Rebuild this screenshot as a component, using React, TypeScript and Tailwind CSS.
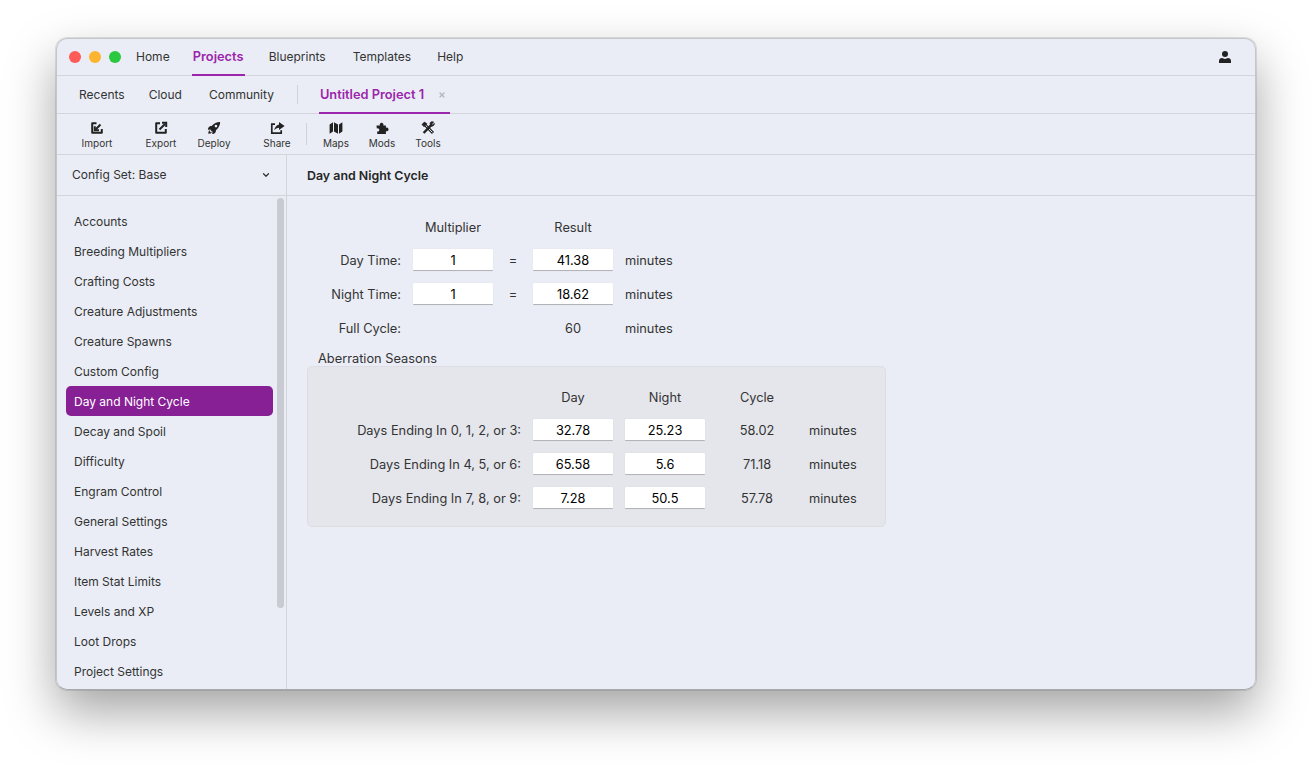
import React from 'react';
import { IoRocketSharp } from 'react-icons/io5';
import { ChevronDown, X } from 'lucide-react';

const sections = [
  'Accounts',
  'Breeding Multipliers',
  'Crafting Costs',
  'Creature Adjustments',
  'Creature Spawns',
  'Custom Config',
  'Day and Night Cycle',
  'Decay and Spoil',
  'Difficulty',
  'Engram Control',
  'General Settings',
  'Harvest Rates',
  'Item Stat Limits',
  'Levels and XP',
  'Loot Drops',
  'Project Settings',
];

const ImportIcon = () => (
  <svg width="14" height="14" viewBox="0 0 14 14" fill="none" stroke="currentColor" strokeWidth="2">
    <path d="M6.5 2.2H2.2v9.6h9.6V8" strokeLinejoin="round" />
    <path d="M10.5 3.5 5.8 8.2" />
    <path d="M4.8 5.2v4h4.2" />
  </svg>
);

const ExportIcon = () => (
  <svg width="14" height="14" viewBox="0 0 14 14" fill="none" stroke="currentColor" strokeWidth="2">
    <path d="M6 2.2H2.2v9.6h9.6V8" strokeLinejoin="round" />
    <path d="M5.5 8.5 11 3" />
    <path d="M8 1.8h4.2V6" />
  </svg>
);

const ShareIcon = () => (
  <svg width="15" height="14" viewBox="0 0 15 14" fill="currentColor">
    <path d="M5 3.2H1.8v9h9.4V9.2" fill="none" stroke="currentColor" strokeWidth="1.7" />
    <path d="M9 1 14.6 5 9 9V6.8C7 6.8 5.4 7.6 4.2 9.6 4.4 6.4 6.4 4 9 3.4z" />
  </svg>
);

const MapIcon = () => (
  <svg width="14" height="14" viewBox="0 0 14 14" fill="currentColor">
    <path d="M.6 3.4 4 1.2v9.4L.6 12.8z" />
    <path d="M5 1.2l4 2.2v9.4l-4-2.2z" />
    <path d="M10 3.4l3.4-2.2v9.4L10 12.8z" />
  </svg>
);

const PuzzleIcon = () => (
  <svg width="14" height="14" viewBox="0 0 14 14" fill="currentColor">
    <path d="M1.5 4.6h3.4a1.9 1.9 0 1 1 3.4 0h2.6v2.2a1.8 1.8 0 1 1 0 3.2V13H2.2v-2.6a1.6 1.6 0 1 0-.4-2.8z" />
  </svg>
);

const ToolsIcon = () => (
  <svg width="14" height="14" viewBox="0 0 14 14" fill="none" stroke="currentColor">
    <path d="M2.4 2.2 12 12" strokeWidth="3" />
    <path d="M3 2.8 11.4 11.4" strokeWidth="1" stroke="#eaedf5" />
    <path d="M1 3.4 3.4 1 6 2.8 3 5.8z" fill="currentColor" strokeWidth="0.6" />
    <path d="M2.6 12 10.4 3.8" strokeWidth="2.4" />
    <path d="M9 2.2a2.4 2.4 0 0 1 3.6-1l-2 1.8.8 1 2-1.6a2.6 2.6 0 0 1-3.4 2.6z" fill="currentColor" strokeWidth="0.8" />
  </svg>
);

const UserIcon = () => (
  <svg width="12" height="12" viewBox="0 0 12 12" fill="currentColor">
    <circle cx="6" cy="3" r="3" />
    <path d="M0 12V9.8C0 8.2 1.4 7 3 7l3 1 3-1c1.6 0 3 1.2 3 2.8V12z" />
  </svg>
);

const ToolButton = ({ label, icon, width }: { label: string; icon: React.ReactNode; width: string }) => (
  <div className={`flex flex-col items-center ${width}`}>
    <div className="h-[14px] flex items-center justify-center text-[#222]">{icon}</div>
    <span className="mt-px text-[10px] leading-[14px] text-[#333]">{label}</span>
  </div>
);

const NumberBox = ({ value }: { value: string }) => (
  <div className="w-20 h-[22px] bg-white rounded-[1px] border-b border-[#b4b4b8] shadow-[0_0_1px_rgba(0,0,0,0.12)] text-[12.8px] leading-[24px] text-center text-black">
    {value}
  </div>
);

const Cell = ({ className = '', children }: { className?: string; children?: React.ReactNode }) => (
  <span className={`pt-[2px] ${className}`}>{children}</span>
);

const App = () => {
  return (
    <div className="w-[1312px] h-[764px] bg-white overflow-hidden pt-[38px] pl-14 font-['Inter',sans-serif] text-[#333]">
      <div className="relative w-[1200px] h-[652px] bg-[#eaedf5] rounded-[11px] overflow-hidden flex flex-col shadow-[0_0_0_1px_rgba(0,0,0,0.1),0_22px_50px_rgba(0,0,0,0.36)]">
        {/* Top menu */}
        <div className="h-[38px] shrink-0 flex items-stretch border-b border-[#d3d5da] pl-[13px] pr-[25px] text-[12px]">
          <div className="flex items-center gap-2 mr-[15px]">
            <span className="w-3 h-3 rounded-full bg-[#fc5b57]" />
            <span className="w-3 h-3 rounded-full bg-[#fdb52f]" />
            <span className="w-3 h-3 rounded-full bg-[#29c83f]" />
          </div>
          <div className="flex items-center">Home</div>
          <div className="ml-[22px] w-[53px] flex items-center justify-center text-[12.8px] font-semibold text-[#9b25ab] border-b-2 border-[#9b25ab] -mb-px pt-[2px]">Projects</div>
          <div className="ml-6 flex items-center">Blueprints</div>
          <div className="ml-[27px] flex items-center">Templates</div>
          <div className="ml-[26px] flex items-center">Help</div>
          <div className="ml-auto flex items-center text-[#222]">
            <UserIcon />
          </div>
        </div>
        {/* Project tabs */}
        <div className="h-[38px] shrink-0 flex items-stretch border-b border-[#d3d5da] pl-[23px] text-[12px]">
          <div className="flex items-center">Recents</div>
          <div className="ml-6 flex items-center">Cloud</div>
          <div className="ml-[27px] flex items-center">Community</div>
          <div className="ml-[23px] my-[9px] w-px bg-[#d0d2d8]" />
          <div className="ml-[21px] w-[131px] pl-px flex items-center gap-[14px] border-b-2 border-[#9b25ab] -mb-px pt-[2px]">
            <span className="text-[12.8px] font-semibold text-[#9b25ab]">Untitled Project 1</span>
            <X size={8} strokeWidth={4} className="text-[#b6b8be]" />
          </div>
        </div>
        {/* Toolbar */}
        <div className="h-[41px] shrink-0 flex items-start border-b border-[#d3d5da] pl-4 pt-[7px]">
          <ToolButton label="Import" width="w-[50px]" icon={<ImportIcon />} />
          <ToolButton label="Export" width="w-[50px] ml-[14px]" icon={<ExportIcon />} />
          <ToolButton label="Deploy" width="w-[50px] ml-[3px]" icon={<IoRocketSharp size={14} />} />
          <ToolButton label="Share" width="w-[50px] ml-[13px]" icon={<ShareIcon />} />
          <div className="ml-[4px] mt-[2px] w-px h-[22px] bg-[#d0d2d8]" />
          <ToolButton label="Maps" width="w-[50px] ml-[4px]" icon={<MapIcon />} />
          <ToolButton label="Mods" width="w-[50px] ml-[-4px]" icon={<PuzzleIcon />} />
          <ToolButton label="Tools" width="w-[50px] ml-[-4px]" icon={<ToolsIcon />} />
        </div>
        {/* Body */}
        <div className="flex-1 flex min-h-0">
          <div className="w-[231px] shrink-0 border-r border-[#d3d5da] flex flex-col">
            <div className="h-[41px] shrink-0 flex items-center justify-between border-b border-[#d3d5da] pl-4 pr-[15px] text-[12px]">
              <span>Config Set: Base</span>
              <ChevronDown size={10} strokeWidth={3} className="text-[#333]" />
            </div>
            <div className="flex-1 relative overflow-hidden pl-[10px] pt-[10px]">
              {sections.map((name) => (
                <div
                  key={name}
                  className={`w-[207px] h-[30px] pl-2 pt-[2px] flex items-center rounded-[5px] text-[12px] ${
                    name === 'Day and Night Cycle' ? 'bg-[#871f95] text-white' : ''
                  }`}
                >
                  {name}
                </div>
              ))}
              <div className="absolute left-[221px] top-[2px] w-[7px] h-[410px] rounded-full bg-[#c8cbd1]" />
            </div>
          </div>
          <div className="flex-1 min-w-0 flex flex-col">
            <div className="h-[41px] shrink-0 flex items-center border-b border-[#d3d5da] pl-5 pt-[2px] text-[12.4px] font-semibold text-[#262626]">
              Day and Night Cycle
            </div>
            <div className="pl-5 pt-[21px] text-[12.8px]">
              <div className="grid grid-cols-[94px_80px_16px_80px_auto] gap-x-3 items-center w-fit">
                <span className="h-[22px]" />
                <span className="h-[22px] leading-[22px] text-center">Multiplier</span>
                <span />
                <span className="h-[22px] leading-[22px] text-center">Result</span>
                <span />
              </div>
              <div className="mt-[10px] grid grid-cols-[94px_80px_16px_80px_auto] gap-x-3 gap-y-3 items-center w-fit">
                <Cell className="text-right">Day Time:</Cell>
                <NumberBox value="1" />
                <Cell className="text-center">=</Cell>
                <NumberBox value="41.38" />
                <Cell>minutes</Cell>
                <Cell className="text-right">Night Time:</Cell>
                <NumberBox value="1" />
                <Cell className="text-center">=</Cell>
                <NumberBox value="18.62" />
                <Cell>minutes</Cell>
                <Cell className="text-right h-[22px] leading-[20px]">Full Cycle:</Cell>
                <span />
                <span />
                <Cell className="text-center">60</Cell>
                <Cell>minutes</Cell>
              </div>
              <div className="mt-[11px] ml-[11px] h-4 leading-[18px]">Aberration Seasons</div>
              <div className="w-[579px] h-[161px] bg-[#e4e6ec] border border-[#dcdee4] rounded-[5px] pt-[18px] pl-5">
                <div className="grid grid-cols-[193px_80px_80px_80px_auto] gap-x-3 gap-y-3 items-center w-fit">
                  <span />
                  <span className="text-center h-[22px] leading-[26px]">Day</span>
                  <span className="text-center h-[22px] leading-[26px]">Night</span>
                  <span className="text-center h-[22px] leading-[26px]">Cycle</span>
                  <span />
                  <Cell className="text-right">Days Ending In 0, 1, 2, or 3:</Cell>
                  <NumberBox value="32.78" />
                  <NumberBox value="25.23" />
                  <Cell className="text-center">58.02</Cell>
                  <Cell>minutes</Cell>
                  <Cell className="text-right">Days Ending In 4, 5, or 6:</Cell>
                  <NumberBox value="65.58" />
                  <NumberBox value="5.6" />
                  <Cell className="text-center">71.18</Cell>
                  <Cell>minutes</Cell>
                  <Cell className="text-right">Days Ending In 7, 8, or 9:</Cell>
                  <NumberBox value="7.28" />
                  <NumberBox value="50.5" />
                  <Cell className="text-center">57.78</Cell>
                  <Cell>minutes</Cell>
                </div>
              </div>
            </div>
          </div>
        </div>
        {/* Window edge */}
        <div className="absolute inset-0 rounded-[11px] border border-[#c4c5c9] border-b-[#a8a9ad] pointer-events-none" />
      </div>
    </div>
  );
};

export default App;
